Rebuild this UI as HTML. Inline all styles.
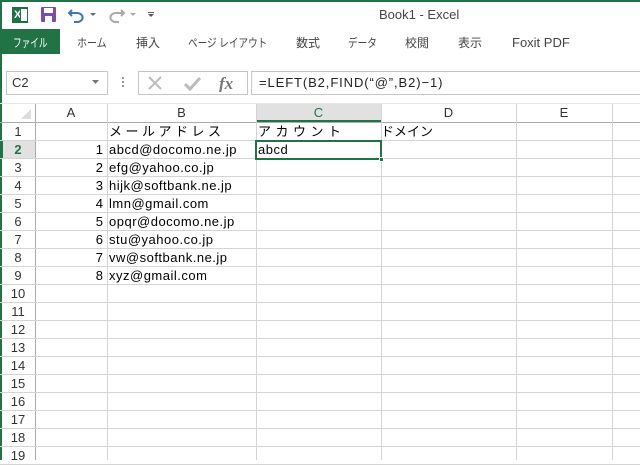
<!DOCTYPE html><html><head><meta charset="utf-8"><style>
*{margin:0;padding:0;box-sizing:border-box}
body{width:640px;height:460px;overflow:hidden;background:#fff;font-family:"Liberation Sans","Noto Sans CJK JP",sans-serif;position:relative;color:#000}
.a{position:absolute}
.t{font-size:12px;color:#444;top:35px;line-height:16px;transform-origin:0 0;white-space:nowrap}
.vl{position:absolute;top:104px;width:1px;height:356px;background:#d4d4d4}
.hl{position:absolute;left:0;width:640px;height:1px;background:#d4d4d4}
.rn{position:absolute;left:1px;width:34px;text-align:center;font-size:13px;color:#333}
.c{position:absolute;font-size:13px;white-space:nowrap;line-height:16px}
.ch{position:absolute;top:104px;height:18px;font-size:13px;color:#333;text-align:center;line-height:18px}
</style></head><body>
<div class="a" style="left:0;top:0;width:640px;height:2px;background:#217346"></div>
<div class="a" style="left:0;top:0;width:2px;height:460px;background:#217346"></div>
<div class="a" style="left:12px;top:7px;width:16px;height:16px;background:#1e7145;color:#fff;font-size:11px;font-weight:bold;line-height:16px;padding-left:2px">X</div>
<div class="a" style="left:20px;top:8px;width:8px;height:14px;border:1px solid #1e7145;background:#fff"></div>
<div class="a" style="left:41px;top:7px;width:15px;height:15px;background:#7d4ba8;border-radius:1px"></div>
<div class="a" style="left:44px;top:8px;width:9px;height:5px;background:#fff"></div>
<div class="a" style="left:45px;top:16px;width:7px;height:6px;background:#fff"></div>
<svg class="a" style="left:68px;top:7px" width="30" height="16"><path d="M4 3 L1 6 L4 9 M1 6 H9 a5 4 0 0 1 0 9 H6" fill="none" stroke="#3c78b4" stroke-width="2"/><path d="M22 6 l3 3 l3-3z" fill="#666"/></svg>
<svg class="a" style="left:108px;top:7px" width="30" height="16"><path d="M13 3 L16 6 L13 9 M16 6 H8 a5 4 0 0 0 0 9 H11" fill="none" stroke="#aaa" stroke-width="2"/><path d="M22 6 l3 3 l3-3z" fill="#aaa"/></svg>
<div class="a" style="left:148px;top:12px;width:6px;height:1px;background:#555"></div>
<svg class="a" style="left:148px;top:14px" width="7" height="5"><path d="M0 0 h6 l-3 3z" fill="#555"/></svg>
<div class="a" style="left:379px;top:7px;font-size:13px;color:#444">Book1 - Excel</div>
<div class="a" style="left:0;top:29px;width:60px;height:25px;background:#217346"></div>
<div class="a t" style="left:13px;color:#fff;transform:scaleX(0.72)">ファイル</div>
<div class="a t" style="left:77px;transform:scaleX(0.83)">ホーム</div>
<div class="a t" style="left:136px">挿入</div>
<div class="a t" style="left:188px;transform:scaleX(0.8)">ページ レイアウト</div>
<div class="a t" style="left:296px">数式</div>
<div class="a t" style="left:348px;transform:scaleX(0.8)">データ</div>
<div class="a t" style="left:405px">校閲</div>
<div class="a t" style="left:458px">表示</div>
<div class="a t" style="left:512px;font-size:13px">Foxit PDF</div>
<div class="a" style="left:6px;top:71px;width:102px;height:24px;border:1px solid #c6c6c6"></div>
<div class="a" style="left:12px;top:75px;font-size:13px;color:#333">C2</div>
<svg class="a" style="left:92px;top:80px" width="8" height="5"><path d="M0 0h7l-3.5 4z" fill="#777"/></svg>
<div class="a" style="left:122px;top:77px;width:2px;height:2px;background:#999;box-shadow:0 4px #999,0 8px #999"></div>
<div class="a" style="left:138px;top:71px;width:110px;height:24px;border:1px solid #c6c6c6"></div>
<svg class="a" style="left:145px;top:74px" width="100" height="18"><path d="M4 3 L16 15 M16 3 L4 15" stroke="#bbb" stroke-width="2"/><path d="M40 10 L45 15 L55 4" stroke="#bbb" stroke-width="3" fill="none"/><text x="74" y="15" font-family="Liberation Serif" font-style="italic" font-weight="bold" font-size="17" fill="#777">fx</text></svg>
<div class="a" style="left:251px;top:71px;width:400px;height:24px;border:1px solid #c6c6c6"></div>
<div class="a" style="left:259px;top:75px;font-size:13px;color:#222;letter-spacing:0.9px">=LEFT(B2,FIND(“@”,B2)−1)</div>
<div class="a" style="left:256px;top:104px;width:125px;height:18px;background:#e1e1e1;border-bottom:2px solid #217346"></div>
<div class="a" style="left:1px;top:141px;width:34px;height:18px;background:#e1e1e1;border-left:2px solid #217346"></div>
<svg class="a" style="left:20px;top:108px" width="12" height="12"><path d="M11 1 V11 H1z" fill="#ddd"/></svg>
<div class="hl" style="top:103px;background:#e6e6e6"></div>
<div class="hl" style="top:122px;background:#ababab"></div>
<div class="vl" style="left:35px;background:#ababab"></div>
<div class="vl" style="left:107px"></div><div class="vl" style="left:256px"></div><div class="vl" style="left:381px"></div><div class="vl" style="left:516px"></div><div class="vl" style="left:612px"></div>
<div class="ch" style="left:35px;width:72px">A</div><div class="ch" style="left:107px;width:149px">B</div><div class="ch" style="left:256px;width:125px;color:#217346">C</div><div class="ch" style="left:381px;width:135px">D</div><div class="ch" style="left:516px;width:96px">E</div>
<div id="rows"></div>
<div class="a" style="left:255px;top:140px;width:127px;height:20px;border:2px solid #217346"></div>
<div class="a" style="left:379px;top:157px;width:5px;height:5px;background:#217346;border:1px solid #fff"></div>
<script>
var h='',d=[["メールアドレス","","アカウント","ドメイン"],["abcd@docomo.ne.jp","1","abcd"],["efg@yahoo.co.jp","2"],["hijk@softbank.ne.jp","3"],["lmn@gmail.com","4"],["opqr@docomo.ne.jp","5"],["stu@yahoo.co.jp","6"],["vw@softbank.ne.jp","7"],["xyz@gmail.com","8"]];
for(var i=0;i<19;i++){var y=122+i*18;h+='<div class="hl" style="top:'+(y+18)+'px"></div><div class="rn" style="top:'+(y+2)+'px'+(i==1?';color:#217346;font-weight:bold':'')+'">'+(i+1)+'</div>';
if(d[i]){var ls=i==0?'letter-spacing:3.5px;':'letter-spacing:0.5px;';h+='<div class="c" style="'+ls+'left:109px;top:'+(y+2)+'px">'+d[i][0]+'</div>';if(d[i][1])h+='<div class="c" style="left:35px;width:68px;text-align:right;top:'+(y+2)+'px">'+d[i][1]+'</div>';if(d[i][2])h+='<div class="c" style="'+(i==0?'letter-spacing:4.5px;':'letter-spacing:0.5px;')+'left:258px;top:'+(y+2)+'px">'+d[i][2]+'</div>';if(d[i][3])h+='<div class="c" style="left:381px;top:'+(y+2)+'px">'+d[i][3]+'</div>';}}
document.getElementById('rows').innerHTML=h;
</script>
</body></html>
